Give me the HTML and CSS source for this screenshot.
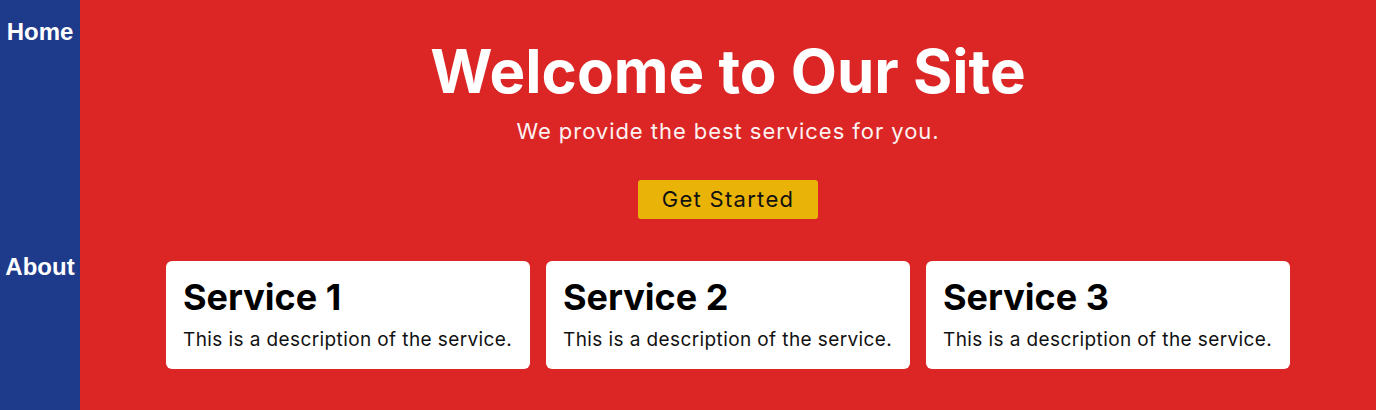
FILE: index.html
```html
<!DOCTYPE html>
<html lang="en">
<head>
<meta charset="utf-8">
<title>Welcome</title>
<link rel="stylesheet" href="styles.css">
</head>
<body>
<div class="layout">
  <nav class="sidebar">
    <a class="nav-link" href="#">Home</a>
    <a class="nav-link" href="#">About</a>
  </nav>
  <main class="main">
    <h1 class="title">Welcome to Our Site</h1>
    <p class="subtitle">We provide the best services for you.</p>
    <button class="cta">Get Started</button>
    <section class="services">
      <div class="card">
        <h2 class="card-title">Service 1</h2>
        <p class="card-text">This is a description of the service.</p>
      </div>
      <div class="card">
        <h2 class="card-title">Service 2</h2>
        <p class="card-text">This is a description of the service.</p>
      </div>
      <div class="card">
        <h2 class="card-title">Service 3</h2>
        <p class="card-text">This is a description of the service.</p>
      </div>
    </section>
  </main>
</div>
</body>
</html>
```
FILE: styles.css
```css
html, body {
  margin: 0;
  padding: 0;
  height: 100%;
}
body {
  font-family: Inter, "Noto Sans", sans-serif;
  background: #dc2626;
}
.layout {
  display: flex;
  min-height: 410px;
}
.sidebar {
  width: 80px;
  flex: none;
  background: #1e3a8a;
  display: flex;
  flex-direction: column;
  align-items: center;
  gap: 207px;
  padding-top: 18px;
}
.nav-link {
  font-family: "Liberation Sans", Arial, sans-serif;
  font-weight: bold;
  font-size: 24px;
  color: #ffffff;
  text-decoration: none;
}
.main {
  flex: 1;
  display: flex;
  flex-direction: column;
  align-items: center;
  padding-top: 41px;
}
.title {
  margin: 0;
  font-size: 60px;
  line-height: 1;
  font-weight: 700;
  color: #ffffff;
}
.subtitle {
  margin: 16px 0 0;
  font-size: 22px;
  line-height: 28px;
  letter-spacing: 0.95px;
  color: #fdf2f2;
}
.cta {
  margin-top: 35px;
  font-family: Inter, "Noto Sans", sans-serif;
  font-size: 22px;
  line-height: 29px;
  letter-spacing: 1.3px;
  padding: 5px 24px;
  border: none;
  border-radius: 3px;
  background: #eab308;
  color: #111111;
}
.services {
  margin-top: 42px;
  display: grid;
  grid-template-columns: repeat(3, 364px);
  gap: 16px;
}
.card {
  background: #ffffff;
  border-radius: 6px;
  padding: 16px 16px 16px 17px;
  text-align: left;
}
.card-title {
  margin: 0;
  font-size: 36px;
  line-height: 40px;
  font-weight: 700;
  color: #000000;
}
.card-text {
  margin: 10px 0 0;
  font-size: 19px;
  line-height: 26px;
  letter-spacing: 0.4px;
  color: #111111;
}
```
